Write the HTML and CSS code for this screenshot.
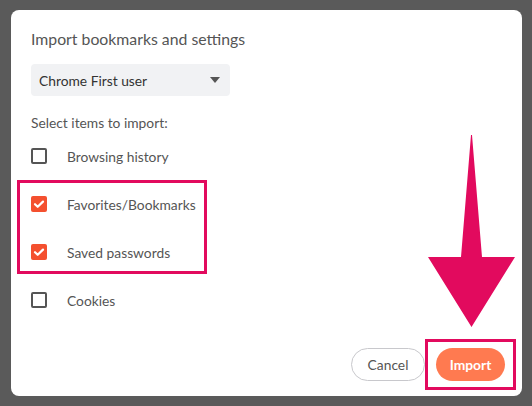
FILE: index.html
```html
<!DOCTYPE html>
<html>
<head>
<meta charset="utf-8">
<link rel="stylesheet" href="styles.css">
</head>
<body>
<div class="dialog">
  <h1 class="title">Import bookmarks and settings</h1>
  <div class="select">
    <span>Chrome First user</span>
    <svg class="caret" width="10" height="6" viewBox="0 0 10 6"><path d="M0 0H10L5 6Z" fill="#555"/></svg>
  </div>
  <p class="hint">Select items to import:</p>
  <ul class="items">
    <li class="item"><span class="box"></span><span>Browsing history</span></li>
    <li class="item"><span class="box checked"><svg width="16" height="16" viewBox="0 0 16 16"><path d="M4 8.2l2.7 2.6L12 5.6" fill="none" stroke="#fff" stroke-width="2.2" stroke-linecap="round" stroke-linejoin="round"/></svg></span><span>Favorites/Bookmarks</span></li>
    <li class="item"><span class="box checked"><svg width="16" height="16" viewBox="0 0 16 16"><path d="M4 8.2l2.7 2.6L12 5.6" fill="none" stroke="#fff" stroke-width="2.2" stroke-linecap="round" stroke-linejoin="round"/></svg></span><span>Saved passwords</span></li>
    <li class="item"><span class="box"></span><span>Cookies</span></li>
  </ul>
  <div class="footer">
    <button class="btn cancel">Cancel</button>
    <button class="btn import">Import</button>
  </div>
  <div class="mark mark-items"></div>
  <div class="mark mark-import"></div>
  <svg class="arrow" width="90" height="195" viewBox="0 0 90 195"><path d="M43 0H44L54 122H87L43.5 192L0 122H33Z" fill="#e20a5e"/></svg>
</div>
</body>
</html>
```
FILE: styles.css
```css
* { box-sizing: border-box; }
html, body { margin: 0; padding: 0; }
body {
  width: 532px;
  height: 406px;
  background: #5a5a5a;
  font-family: "Lato", "Noto Sans", sans-serif;
  overflow: hidden;
}
.dialog {
  position: relative;
  margin: 10px 0 0 11px;
  width: 511px;
  height: 386px;
  background: #fff;
  border-radius: 8px;
  padding: 19px 17px 15px 20px;
  display: flex;
  flex-direction: column;
}
.title {
  margin: 0;
  font-size: 15.8px;
  font-weight: 400;
  line-height: 20px;
  color: #555;
}
.select {
  margin-top: 15px;
  width: 199px;
  height: 32px;
  background: #f1f2f4;
  border-radius: 4px;
  display: flex;
  align-items: center;
  justify-content: space-between;
  padding: 0 10px 0 8px;
  font-size: 13.8px;
  color: #333;
}
.caret { display: block; }
.hint {
  margin: 18px 0 0;
  font-size: 13.8px;
  line-height: 18px;
  color: #555;
}
.items {
  list-style: none;
  margin: 0;
  padding: 0;
}
.item {
  height: 48px;
  display: flex;
  align-items: center;
  gap: 20px;
  font-size: 13.8px;
  color: #555;
}
.box {
  width: 16px;
  height: 16px;
  border: 2px solid #555;
  border-radius: 2px;
  flex: none;
  display: flex;
  align-items: center;
  justify-content: center;
}
.box.checked {
  background: #f4502f;
  border: none;
}
.box svg { display: block; }
.footer {
  margin-top: auto;
  display: flex;
  justify-content: flex-end;
  gap: 11px;
}
.btn {
  font-family: inherit;
  font-size: 13.8px;
  height: 33px;
  border-radius: 17px;
  cursor: pointer;
}
.cancel {
  width: 74px;
  background: #fff;
  border: 1px solid #c8c8cc;
  color: #555;
}
.import {
  width: 69px;
  background: #ff7a50;
  border: none;
  color: #fff;
  font-weight: 700;
}
.mark {
  position: absolute;
  border: 3px solid #e20a5e;
}
.mark-items {
  left: 6px;
  top: 170px;
  width: 190px;
  height: 94px;
}
.mark-import {
  left: 414px;
  top: 329px;
  width: 91px;
  height: 51px;
}
.arrow {
  position: absolute;
  left: 417px;
  top: 125px;
}
```
